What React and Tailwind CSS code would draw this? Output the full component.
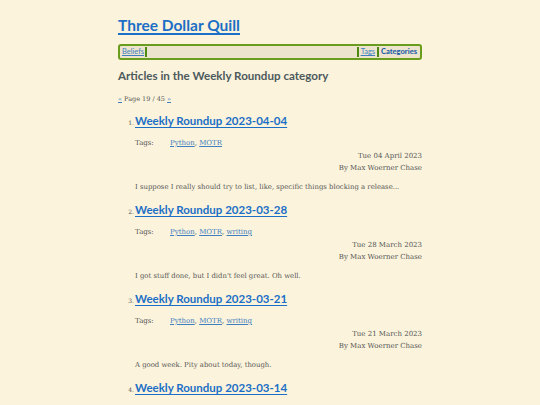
import React from 'react';

const posts = [
  {
    n: 1,
    title: 'Weekly Roundup 2023-04-04',
    tags: ['Python', 'MOTR'],
    date: 'Tue 04 April 2023',
    summary: 'I suppose I really should try to list, like, specific things blocking a release...',
  },
  {
    n: 2,
    title: 'Weekly Roundup 2023-03-28',
    tags: ['Python', 'MOTR', 'writing'],
    date: 'Tue 28 March 2023',
    summary: "I got stuff done, but I didn't feel great. Oh well.",
  },
  {
    n: 3,
    title: 'Weekly Roundup 2023-03-21',
    tags: ['Python', 'MOTR', 'writing'],
    date: 'Tue 21 March 2023',
    summary: 'A good week. Pity about today, though.',
  },
  {
    n: 4,
    title: 'Weekly Roundup 2023-03-14',
    tags: ['Python', 'MOTR'],
    date: 'Tue 14 March 2023',
    summary: 'Some stuff happened.',
  },
];

const head = "font-['Lato',sans-serif]";
const body = "font-['DejaVu_Serif',serif]";

const Sep = () => <span className="w-[2px] my-[1px] bg-[#4d8a12]" />;

export default function App() {
  return (
    <div className="h-[405px] bg-[#fbf3dc] overflow-hidden">
      <div className="w-[304px] mx-auto pt-[14px]">
        {/* site title */}
        <h1 className={`${head} text-[15.5px] font-bold leading-[22px] text-[#1b6fc6] underline decoration-[1.5px] underline-offset-2`}>
          Three Dollar Quill
        </h1>

        {/* nav */}
        <nav className={`${head} mt-[8px] h-[16px] flex items-stretch rounded-[3px] border-2 border-[#6a9c1e] bg-[#ece4cd] text-[7.5px] leading-[12px] px-[1px]`}>
          <a className="text-[#3f7fc0] underline px-[1px]">Beliefs</a>
          <Sep />
          <span className="flex-1" />
          <Sep />
          <a className="text-[#3f7fc0] underline px-[2px]">Tags</a>
          <Sep />
          <a className="text-[#1d5fa8] font-black px-[2px]">Categories</a>
        </nav>

        <h2 className={`${head} mt-[8px] text-[11.6px] font-bold leading-[16px] text-[#4d5a5c]`}>
          Articles in the Weekly Roundup category
        </h2>

        <p className={`${body} mt-[10px] text-[6.5px] leading-[10px] text-[#555]`}>
          <a className="text-[#3f7fc0] underline">«</a> Page 19 / 45{' '}
          <a className="text-[#3f7fc0] underline">»</a>
        </p>

        <ol className="mt-[8px]">
          {posts.map((p) => (
            <li key={p.n} className="pl-[17px] mb-[9px]">
              <div className="flex items-baseline">
                <span className={`${body} w-[8px] -ml-[9px] mr-[1px] text-[6px] text-[#555] text-right`}>{p.n}.</span>
                <a className={`${head} text-[11.5px] font-bold leading-[18px] text-[#1b6fc6] underline decoration-[1.2px] underline-offset-[1.5px]`}>
                  {p.title}
                </a>
              </div>
              <div className={`${body} mt-[8px] flex text-[7px] leading-[10px] text-[#555]`}>
                <span className="w-[35px]">Tags:</span>
                <span>
                  {p.tags.map((t, i) => (
                    <React.Fragment key={t}>
                      {i > 0 && ', '}
                      <a className="text-[#3f7fc0] underline">{t}</a>
                    </React.Fragment>
                  ))}
                </span>
              </div>
              <div className={`${body} mt-[2px] text-right text-[7px] leading-[12px] text-[#555]`}>
                <div>{p.date}</div>
                <div>By Max Woerner Chase</div>
              </div>
              <p className={`${body} mt-[8px] text-[6.9px] leading-[10px] text-[#555]`}>{p.summary}</p>
            </li>
          ))}
        </ol>
      </div>
    </div>
  );
}
